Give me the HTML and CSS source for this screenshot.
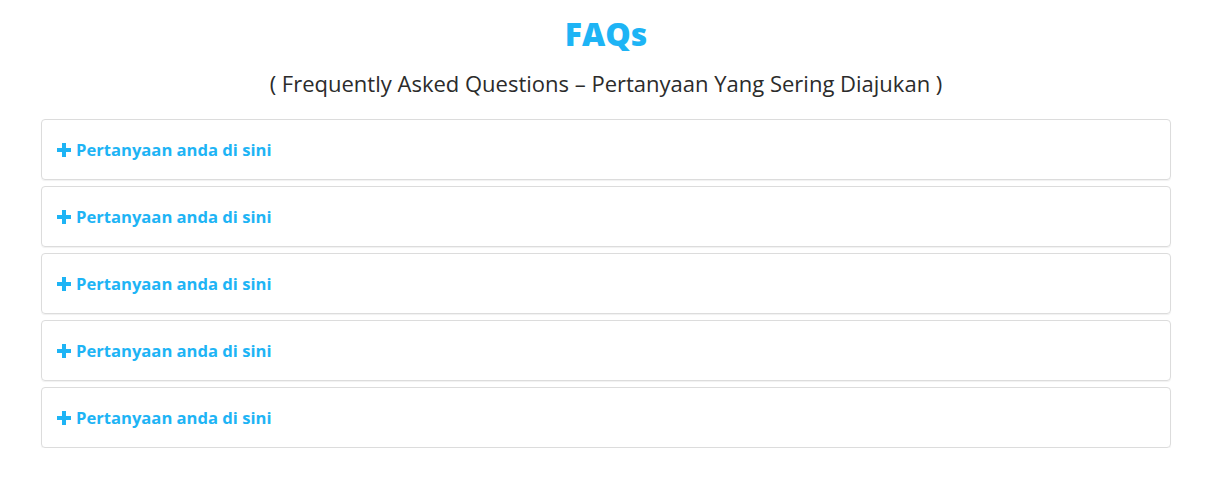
FILE: index.html
```html
<!DOCTYPE html>
<html lang="id">
<head>
<meta charset="utf-8">
<title>FAQs</title>
<link rel="stylesheet" href="styles.css">
</head>
<body>
<main class="faq">
  <h1 class="faq-title">FAQs</h1>
  <p class="faq-sub">( Frequently Asked Questions – Pertanyaan Yang Sering Diajukan )</p>
  <div class="faq-list">
    <div class="faq-item"><svg class="plus" viewBox="0 0 14 14"><path d="M5 0h4v5h5v4H9v5H5V9H0V5h5z"/></svg><span>Pertanyaan anda di sini</span></div>
    <div class="faq-item"><svg class="plus" viewBox="0 0 14 14"><path d="M5 0h4v5h5v4H9v5H5V9H0V5h5z"/></svg><span>Pertanyaan anda di sini</span></div>
    <div class="faq-item"><svg class="plus" viewBox="0 0 14 14"><path d="M5 0h4v5h5v4H9v5H5V9H0V5h5z"/></svg><span>Pertanyaan anda di sini</span></div>
    <div class="faq-item"><svg class="plus" viewBox="0 0 14 14"><path d="M5 0h4v5h5v4H9v5H5V9H0V5h5z"/></svg><span>Pertanyaan anda di sini</span></div>
    <div class="faq-item"><svg class="plus" viewBox="0 0 14 14"><path d="M5 0h4v5h5v4H9v5H5V9H0V5h5z"/></svg><span>Pertanyaan anda di sini</span></div>
  </div>
</main>
</body>
</html>
```
FILE: styles.css
```css
html, body {
  margin: 0;
  padding: 0;
  background: #fff;
}
body {
  font-family: "Open Sans", "Liberation Sans", sans-serif;
  color: #333;
}
.faq {
  width: 1130px;
  margin-left: 41px;
  padding-top: 14px;
}
.faq-title {
  margin: 0;
  text-align: center;
  font-size: 32px;
  line-height: 40px;
  font-weight: 800;
  color: #1eb4f5;
}
.faq-sub {
  margin: 16px 0 0;
  text-align: center;
  font-size: 22px;
  line-height: 26px;
  font-weight: 500;
  color: #2b2b2b;
}
.faq-list {
  margin-top: 23px;
  display: flex;
  flex-direction: column;
  gap: 6px;
}
.faq-item {
  height: 59px;
  border: 1px solid #dcdcdc;
  border-radius: 4px;
  box-shadow: 0 1px 1px rgba(0,0,0,0.06);
  display: flex;
  align-items: center;
  padding-left: 15px;
  gap: 5px;
  color: #1eb4f5;
  font-weight: 700;
  font-size: 16.6px;
}
.plus {
  width: 14px;
  height: 14px;
  fill: #1eb4f5;
  flex: none;
}
```
